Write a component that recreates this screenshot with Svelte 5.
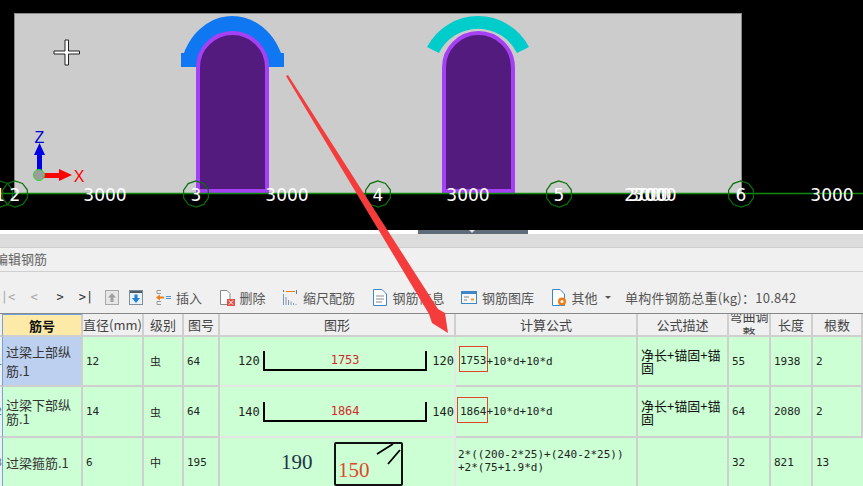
<script lang="ts">
	const gridMarks = [
		{ n: '1', x: 0 },
		{ n: '2', x: 15 },
		{ n: '3', x: 196 },
		{ n: '4', x: 378 },
		{ n: '5', x: 559 },
		{ n: '6', x: 741 }
	];
	const spans = [105, 287, 468, 832];

	// the grid bubbles are rough polygons in the source program
	const bubble = (cx: number, cy = 194, r = 13, sides = 10) =>
		Array.from({ length: sides }, (_, i) => {
			const a = (i / sides) * Math.PI * 2 + 0.3;
			return `${(cx + Math.cos(a) * r).toFixed(1)},${(cy + Math.sin(a) * r).toFixed(1)}`;
		}).join(' ');

	const tools = [
		{ id: 'insert', label: '插入' },
		{ id: 'del', label: '删除' },
		{ id: 'scale', label: '缩尺配筋' },
		{ id: 'info', label: '钢筋信息' },
		{ id: 'lib', label: '钢筋图库' },
		{ id: 'other', label: '其他' }
	];
	const heads = ['筋号', '直径(mm)', '级别', '图号', '图形', '计算公式', '公式描述', '弯曲调整', '长度', '根数'];
</script>

<div class="page">
	<svg class="scene" width="863" height="230" viewBox="0 0 863 230">
		<rect x="14.5" y="13.5" width="727" height="180" fill="#cccccc" stroke="#8a8a8a" />
		<!-- beam over the first opening -->
		<path d="M181 67 V53 H184 C192 32 210 16 232.500 16 C255 16 273 32 281 53 H284 V67 H267 A34.500 34.500 0 0 0 198 67 Z" fill="#0f77f2" />
		<path d="M198 191 V67.500 A34.500 34.500 0 0 1 267 67.500 V191 Z" fill="#521b7d" stroke="#a640f5" stroke-width="4" />
		<!-- arc over the second opening -->
		<path d="M427 47 A57.500 57.500 0 0 1 529 47 L517 53 A43.500 43.500 0 0 0 439 53 Z" fill="#00cccc" />
		<path d="M444 191 V67.500 A34.500 34.500 0 0 1 513 67.500 V191 Z" fill="#521b7d" stroke="#a640f5" stroke-width="4" />

		<!-- cursor -->
		<path d="M65 40 H68.500 V51 H79.500 V54 H68.500 V65 H65 V54 H54 V51 H65 Z" fill="#fff" stroke="#222" stroke-width="1" />

		<!-- axes -->
		<path d="M39.500 143 L45 155 H34 Z" fill="#0000e6" />
		<rect x="37" y="154" width="5" height="18" fill="#0000e6" />
		<rect x="43" y="173" width="17" height="5" fill="#f00" />
		<path d="M59 169 L72 175 L59 181 Z" fill="#f00" />
		<circle cx="39" cy="175" r="5.500" fill="#9c9c9c" stroke="#22dd22" stroke-width="1" />
		<text x="39.500" y="143" class="axis blue">Z</text>
		<text x="79" y="182" class="axis red">X</text>

		<line x1="0" y1="193.500" x2="863" y2="193.500" stroke="#0c8a0c" stroke-width="1.400" />
		{#each gridMarks as m}
			<polygon points={bubble(m.x)} fill="none" stroke="#0a6e0a" stroke-width="1.200" />
			<text x={m.x} y="201" class="lbl">{m.n}</text>
		{/each}
		{#each spans as x}
			<text {x} y="201" class="lbl">3000</text>
		{/each}
		<text x="646" y="201" class="lbl">2700</text>
		<text x="650" y="201" class="lbl">3000</text>
		<text x="655" y="201" class="lbl">3000</text>
	</svg>

	<div class="splitter"><span class="handle"><i></i></span></div>
	<div class="band"></div>
	<div class="title">编辑钢筋</div>

	<div class="toolbar">
		<span class="nav off">|&lt;</span>
		<span class="nav off">&lt;</span>
		<span class="nav">&gt;</span>
		<span class="nav">&gt;|</span>
		<svg class="updown" width="14" height="15" viewBox="0 0 14 15">
			<rect x=".5" y=".5" width="13" height="14" fill="#e6e6e6" stroke="#a8a8a8" />
			<path d="M7 3 L11 7.500 H8.500 V12 H5.500 V7.500 H3 Z" fill="#a0a0a0" />
		</svg>
		<svg class="updown" width="14" height="15" viewBox="0 0 14 15">
			<rect x=".5" y=".5" width="13" height="14" fill="#e8f0f8" stroke="#7f8c99" />
			<rect x="1" y="1" width="12" height="2" fill="#4f5b66" />
			<path d="M7 13 L11 8 H8.500 V4.500 H5.500 V8 H3 Z" fill="#1f7fd6" />
		</svg>
		{#each tools as t}
			<span class="tool">
				<svg width="16" height="17" viewBox="0 0 16 17">
					{#if t.id === 'insert'}
						<path d="M6 1.500 H2 V4.500 H6 M6 12.500 H2 V15.500 H6" fill="none" stroke="#999" />
						<path d="M1 8.500 L5 5.500 V7.500 H9 V9.500 H5 V11.500 Z" fill="#ef7d1a" />
						<path d="M11 7.500 H16 M11 9.500 H16" stroke="#4a90d9" />
					{:else if t.id === 'del'}
						<path d="M1.500 1.500 H8 L11 4.500 V15.500 H1.500 Z" fill="#fafafa" stroke="#888" />
						<rect x="8" y="10" width="8" height="7" fill="#e0524a" />
						<path d="M10 11.500 L14 15.500 M14 11.500 L10 15.500" stroke="#fff" />
					{:else if t.id === 'scale'}
						<path d="M1.500 5 V16 M4 8 V16 M6.500 11 V16 M9 12.500 V16 M11.500 14 V16 M14 15 V16" stroke="#7a98b5" />
						<path d="M4 2.500 H13" stroke="#ef7d1a" />
						<path d="M14.500 1 V5 M1.500 1 V3" stroke="#777" />
					{:else if t.id === 'info'}
						<path d="M1.500 .5 H10 L14.500 5 V16.500 H1.500 Z" fill="#fff" stroke="#3f86c9" />
						<path d="M4 7 H12 M4 10 H12 M4 13 H10" stroke="#8a8a8a" />
					{:else if t.id === 'lib'}
						<rect x=".5" y="2.500" width="15" height="12" fill="#f6f6f6" stroke="#3f86c9" />
						<rect x="1" y="3" width="14" height="2" fill="#3f86c9" />
						<path d="M3 8 H8 M3 11 H6" stroke="#888" />
						<rect x="10" y="9.500" width="3" height="2" fill="#e9a23b" />
					{:else}
						<path d="M1.500 .5 H9 L13.500 5 V16.500 H1.500 Z" fill="#fff" stroke="#3f86c9" />
						<circle cx="11" cy="12.500" r="4" fill="#ef7d1a" />
						<circle cx="11" cy="12.500" r="1.500" fill="#fff" />
					{/if}
				</svg>
				{t.label}
			</span>
		{/each}
		<em class="caret"></em>
		<span class="total">单构件钢筋总重(kg)：10.842</span>
	</div>

	<div class="table">
		<div class="cell head gut"></div>
		{#each heads as h, i}
			<div class="cell head" class:active={i === 0} class:clip={i === 7}>{h}</div>
		{/each}

		<div class="cell gut">1</div>
		<div class="cell name sel">过梁上部纵筋.1</div>
		<div class="cell">12</div>
		<div class="cell grade">虫</div>
		<div class="cell">64</div>
		<div class="cell shape">
			<span class="end l">120</span>
			<span class="bar"><b>1753</b></span>
			<span class="end r">120</span>
		</div>
		<div class="cell formula"><span class="mark">1753</span>+10*d+10*d</div>
		<div class="cell desc">净长+锚固+锚固</div>
		<div class="cell">55</div>
		<div class="cell">1938</div>
		<div class="cell">2</div>

		<div class="cell gut">2</div>
		<div class="cell name tight">过梁下部纵筋.1</div>
		<div class="cell">14</div>
		<div class="cell grade">虫</div>
		<div class="cell">64</div>
		<div class="cell shape">
			<span class="end l">140</span>
			<span class="bar"><b>1864</b></span>
			<span class="end r">140</span>
		</div>
		<div class="cell formula"><span class="mark wide">1864</span>+10*d+10*d</div>
		<div class="cell desc">净长+锚固+锚固</div>
		<div class="cell">64</div>
		<div class="cell">2080</div>
		<div class="cell">2</div>

		<div class="cell gut">3</div>
		<div class="cell name">过梁箍筋.1</div>
		<div class="cell">6</div>
		<div class="cell grade">中</div>
		<div class="cell">195</div>
		<div class="cell shape stirrup">
			<span class="side">190</span>
			<span class="box">
				<b>150</b>
				<svg width="68" height="44" viewBox="0 0 68 44">
					<path d="M41 10 L57 0 M52 20 L64 6" stroke="#000" stroke-width="1.800" />
				</svg>
			</span>
		</div>
		<div class="cell formula small">2*((200-2*25)+(240-2*25))<br />+2*(75+1.9*d)</div>
		<div class="cell"></div>
		<div class="cell">32</div>
		<div class="cell">821</div>
		<div class="cell">13</div>
	</div>

	<svg class="arrow" width="863" height="486" viewBox="0 0 863 486">
		<path d="M286 76 L288 75 L438 309 L445 313 L448 333 L432 323 L429 314 Z" fill="#f43c3c" />
	</svg>
</div>

<style>
	:global(body) {
		margin: 0;
	}

	.page {
		position: relative;
		width: 863px;
		height: 486px;
		overflow: hidden;
		background: #f0f0f0;
		font-family: 'Noto Sans CJK SC', 'Liberation Sans', sans-serif;
		font-size: 13px;
		color: #333;
		display: flex;
		flex-direction: column;
	}

	.scene {
		display: block;
		flex: none;
		background: #000;
	}

	.lbl {
		font-family: 'DejaVu Sans', sans-serif;
		font-size: 17px;
		fill: #fff;
		text-anchor: middle;
	}

	.axis {
		font-family: 'Liberation Sans', sans-serif;
		font-size: 16px;
		text-anchor: middle;
	}
	.blue { fill: #0000d0; }
	.red { fill: #f00; }

	.splitter {
		height: 4px;
		background: #fff;
		flex: none;
		position: relative;
	}

	.handle {
		position: absolute;
		left: 418px;
		top: 0;
		width: 110px;
		height: 4px;
		background: #5f6b78;
	}

	.handle i {
		position: absolute;
		left: 51px;
		top: 0;
		border: 3px solid transparent;
		border-top-color: #ddd;
		border-bottom: 0;
	}

	.band {
		height: 13px;
		background: #dcdcdc;
		flex: none;
	}

	.title {
		height: 23px;
		flex: none;
		border-top: 1px solid #cfcfcf;
		border-bottom: 1px solid #cfcfcf;
		line-height: 21px;
		margin-left: -5px;
		color: #666;
	}

	.toolbar {
		height: 41px;
		flex: none;
		display: flex;
		align-items: center;
		padding: 9px 0 0;
		margin-left: -5px;
		box-sizing: border-box;
		white-space: nowrap;
		color: #555;
	}

	.nav {
		width: 26px;
		font-family: 'DejaVu Sans Mono', monospace;
		font-size: 12px;
		text-align: center;
		color: #333;
	}

	.nav.off { color: #aaa; }

	.updown {
		margin: 0 4px 0 6px;
	}

	.updown + .updown {
		margin-right: 0;
	}

	.tool {
		display: inline-flex;
		align-items: center;
		gap: 5px;
		margin-left: 12px;
		margin-right: 4.5px;
	}

	.caret {
		border: 3px solid transparent;
		border-top-color: #555;
		border-bottom: 0;
		margin-left: 3px;
	}

	.total {
		margin-left: 14px;
		letter-spacing: 0.25px;
	}

	.table {
		display: grid;
		grid-template-columns: 3px 80px 61px 40px 36px 236px 182px 91px 42px 42px 50px;
		grid-template-rows: 23px 50px 51px 50px;
		background: #ccffd4;
		border-top: 1px solid #888;
		flex: none;
	}

	.cell {
		box-sizing: border-box;
		border-right: 2px solid #cfcfcf;
		border-bottom: 2px solid #cfcfcf;
		display: flex;
		align-items: center;
		padding-left: 3px;
		font-family: 'DejaVu Sans Mono', 'Noto Sans CJK SC', monospace;
		font-size: 11px;
		color: #222;
		overflow: hidden;
		position: relative;
		min-width: 0;
	}

	.cell:last-child { border-right: 0; }

	.head {
		background: #f0f0f0;
		justify-content: center;
		font-family: 'Noto Sans CJK SC', sans-serif;
		font-size: 13px;
		color: #444;
		padding: 0;
		white-space: nowrap;
	}

	.head.active {
		background: #fdeaa8;
		color: #111;
		font-weight: 700;
		border-top: 1px solid #6aa5e0;
	}

	.head.clip {
		white-space: normal;
		line-height: 17px;
		text-align: center;
		padding-bottom: 1px;
	}

	.gut {
		background: #f0f0f0;
		border-right: 1px solid #6aa5e0;
		padding: 0;
		justify-content: flex-end;
		color: #777;
	}

	.name {
		font-family: 'Noto Sans CJK SC', sans-serif;
		font-size: 13px;
		line-height: 19px;
		color: #333;
		padding: 0 2px 0 3px;
	}

	.name.tight { line-height: 14px; }

	.sel { background: #bdd0ef; }

	.grade {
		font-family: 'Noto Sans CJK SC', sans-serif;
		padding-left: 6px;
	}

	.shape {
		padding: 0 0 0 18px;
		font-size: 12px;
		border-color: #e6e6e6;
	}

	.end.l { width: 25px; }
	.end.r { margin-left: 5px; }

	.bar {
		width: 165px;
		height: 20px;
		box-sizing: border-box;
		border: 2px solid #000;
		border-top: 0;
		text-align: center;
		line-height: 19px;
	}

	.bar b {
		font-weight: 400;
		color: #d22a2a;
	}

	.stirrup {
		padding-left: 61px;
		font-family: 'Liberation Serif', serif;
	}

	.side {
		width: 53px;
		color: #1c3448;
		font-size: 21px;
	}

	.box {
		width: 69px;
		height: 44px;
		box-sizing: border-box;
		border: 2px solid #111;
		border-radius: 2px;
		margin-top: 4px;
		position: relative;
		padding: 14px 0 0 2px;
		font-size: 21px;
		line-height: 24px;
	}

	.box b {
		font-weight: 400;
		color: #e2452b;
	}

	.box svg {
		position: absolute;
		left: 0;
		top: 0;
	}

	.formula {
		padding-left: 4px;
		white-space: nowrap;
	}

	.formula.small {
		line-height: 13px;
		display: block;
		padding: 10px 0 0 2px;
	}

	.mark {
		outline: 1.5px solid #e2452b;
		line-height: 20px;
		padding-top: 4px;
		margin-bottom: 4px;
	}

	.mark.wide {
		padding-left: 2px;
		margin-left: -2px;
	}

	.desc {
		font-family: 'Noto Sans CJK SC', sans-serif;
		font-size: 13px;
		line-height: 13px;
		color: #111;
	}

	.arrow {
		position: absolute;
		left: 0;
		top: 0;
		pointer-events: none;
	}
</style>
